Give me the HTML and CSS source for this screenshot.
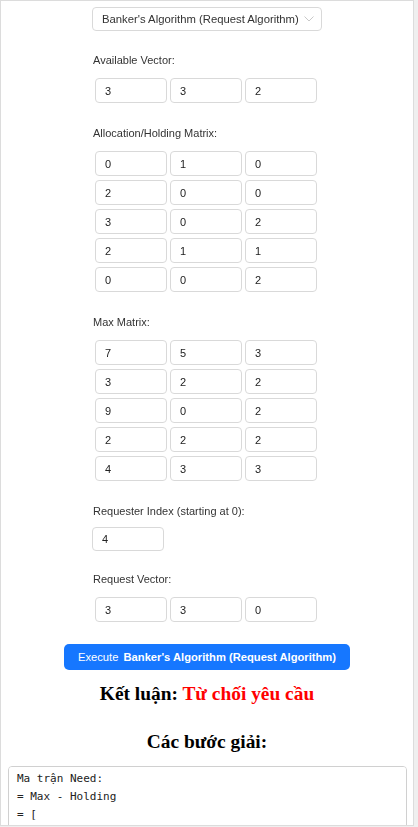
FILE: index.html
```html
<!DOCTYPE html>
<html lang="vi">
<head>
<meta charset="utf-8">
<title>Banker's Algorithm</title>
<link rel="stylesheet" href="styles.css">
</head>
<body>
<div class="app">
  <div class="form">
    <div class="select-wrap">
      <select class="algo-select">
        <option>Banker's Algorithm (Request Algorithm)</option>
      </select>
      <svg class="chevron" width="10" height="6" viewBox="0 0 10 6"><polyline points="0.5,0.5 5,5 9.5,0.5" fill="none" stroke="#c8c8c8" stroke-width="1"/></svg>
    </div>

    <div class="group">
      <div class="label">Available Vector:</div>
      <div class="rows">
        <div class="row"><input class="cell" value="3"><input class="cell" value="3"><input class="cell" value="2"></div>
      </div>
    </div>

    <div class="group">
      <div class="label">Allocation/Holding Matrix:</div>
      <div class="rows">
        <div class="row"><input class="cell" value="0"><input class="cell" value="1"><input class="cell" value="0"></div>
        <div class="row"><input class="cell" value="2"><input class="cell" value="0"><input class="cell" value="0"></div>
        <div class="row"><input class="cell" value="3"><input class="cell" value="0"><input class="cell" value="2"></div>
        <div class="row"><input class="cell" value="2"><input class="cell" value="1"><input class="cell" value="1"></div>
        <div class="row"><input class="cell" value="0"><input class="cell" value="0"><input class="cell" value="2"></div>
      </div>
    </div>

    <div class="group">
      <div class="label">Max Matrix:</div>
      <div class="rows">
        <div class="row"><input class="cell" value="7"><input class="cell" value="5"><input class="cell" value="3"></div>
        <div class="row"><input class="cell" value="3"><input class="cell" value="2"><input class="cell" value="2"></div>
        <div class="row"><input class="cell" value="9"><input class="cell" value="0"><input class="cell" value="2"></div>
        <div class="row"><input class="cell" value="2"><input class="cell" value="2"><input class="cell" value="2"></div>
        <div class="row"><input class="cell" value="4"><input class="cell" value="3"><input class="cell" value="3"></div>
      </div>
    </div>

    <div class="group">
      <div class="label label-tight">Requester Index (starting at 0):</div>
      <input class="cell single" value="4">
    </div>

    <div class="group group-after-single">
      <div class="label">Request Vector:</div>
      <div class="rows">
        <div class="row"><input class="cell" value="3"><input class="cell" value="3"><input class="cell" value="0"></div>
      </div>
    </div>
  </div>

  <button class="execute">Execute <b>Banker's Algorithm (Request Algorithm)</b></button>

  <h3 class="result">Kết luận: <span class="deny">Từ chối yêu cầu</span></h3>
  <h3 class="steps-title">Các bước giải:</h3>

  <textarea class="steps">Ma trận Need:
= Max - Holding
= [
    [7, 4, 3],
    [1, 2, 2],
    [6, 0, 0],
    [0, 1, 1],
    [4, 3, 1]
]</textarea>
</div>
</body>
</html>
```

FILE: styles.css
```css
html, body {
  margin: 0;
  padding: 0;
}
body {
  background: #efefef;
  font-family: "Liberation Sans", Arial, sans-serif;
  color: #333;
}
.app {
  box-sizing: border-box;
  width: 414px;
  height: 826px;
  overflow: hidden;
  background: #fff;
  border: 1px solid #dcdcdc;
  padding-top: 6px;
}
.form {
  width: 230px;
  margin: 0 auto;
}
.select-wrap {
  position: relative;
  height: 24px;
}
.algo-select {
  appearance: none;
  -webkit-appearance: none;
  box-sizing: border-box;
  width: 230px;
  height: 24px;
  border: 1px solid #d9d9d9;
  border-radius: 4px;
  background: #fff;
  padding: 0 0 0 9px;
  font-family: "Liberation Sans", Arial, sans-serif;
  font-size: 11.3px;
  color: #333;
  outline: none;
}
.chevron {
  position: absolute;
  right: 8px;
  top: 9px;
}
.group {
  margin-top: 22px;
}
.group + .group {
  margin-top: 23px;
}
.group + .group.group-after-single {
  margin-top: 21px;
}
.label {
  font-size: 11px;
  line-height: 14px;
  color: #333;
  padding-left: 1px;
  margin-bottom: 11px;
}
.label.label-tight {
  margin-bottom: 9px;
}
.rows {
  display: flex;
  flex-direction: column;
  gap: 4px;
  padding-left: 3px;
}
.row {
  display: flex;
  gap: 3px;
}
.cell {
  box-sizing: border-box;
  width: 72px;
  height: 25px;
  border: 1px solid #d9d9d9;
  border-radius: 4px;
  padding: 0 9px;
  font-family: "Liberation Sans", Arial, sans-serif;
  font-size: 11px;
  color: #222;
  background: #fff;
  outline: none;
  margin: 0;
}
.cell.single {
  display: block;
  height: 24px;
}
.execute {
  display: block;
  box-sizing: border-box;
  width: 286px;
  height: 26px;
  margin: 22px auto 0;
  border: none;
  border-radius: 5px;
  background: #1677ff;
  color: #fff;
  font-family: "Liberation Sans", Arial, sans-serif;
  font-size: 11.2px;
  padding: 0;
}
.execute b {
  margin-left: 2px;
}
h3 {
  font-family: "Liberation Serif", "Times New Roman", serif;
  font-size: 19.4px;
  font-weight: bold;
  text-align: center;
  color: #000;
  line-height: 22px;
  margin: 0;
}
.result {
  margin-top: 13px;
}
.deny {
  color: #ff0000;
}
.steps-title {
  margin-top: 26px;
}
.steps {
  display: block;
  box-sizing: border-box;
  width: 399px;
  height: 140px;
  margin: 13px 0 0 7px;
  border: 1px solid #d0d0d0;
  border-radius: 4px;
  padding: 3px 8px 2px;
  font-family: "DejaVu Sans Mono", monospace;
  font-size: 11px;
  line-height: 18px;
  color: #222;
  resize: both;
  outline: none;
}
```
